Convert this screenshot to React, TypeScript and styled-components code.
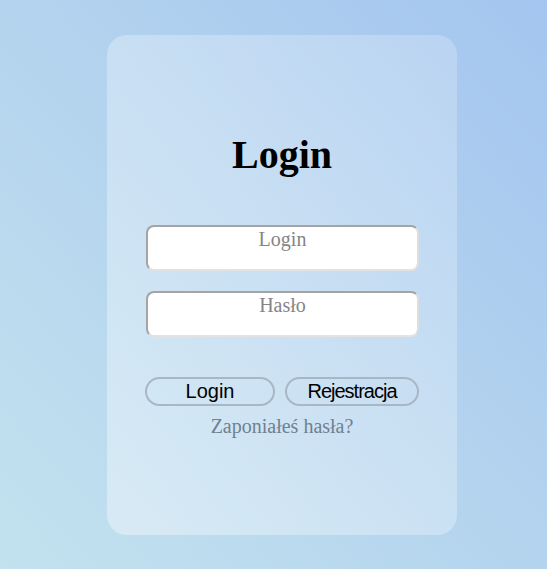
import React from "react";
import styled, { createGlobalStyle } from "styled-components";

const Global = createGlobalStyle`
  html, body { margin: 0; padding: 0; }
  body {
    font-family: "Liberation Serif", "Times New Roman", serif;
    background: linear-gradient(to top right, #c3e2ee, #a4c5ef);
    min-height: 100vh;
  }
`;

const Page = styled.main`
  min-height: 100vh;
  display: flex;
  align-items: center;
  padding-left: 107px;
  box-sizing: border-box;
`;

const Card = styled.section`
  width: 350px;
  height: 500px;
  border-radius: 20px;
  background: linear-gradient(to top right, rgba(255, 255, 255, 0.38), rgba(255, 255, 255, 0.2));
  display: flex;
  flex-direction: column;
  align-items: center;
  justify-content: center;
  box-sizing: border-box;
`;

const Title = styled.h1`
  margin: 0 0 47px;
  font-family: "Liberation Serif", serif;
  font-size: 40px;
  font-weight: bold;
  color: #000;
  line-height: normal;
`;

const Form = styled.form`
  width: 274px;
  display: flex;
  flex-direction: column;
  align-items: center;
`;

const Field = styled.input`
  width: 273px;
  height: 46px;
  box-sizing: border-box;
  margin: 0 0 20px 1px;
  padding: 1px 2px 18px;
  border-width: 2px;
  border-style: solid;
  border-color: #a4a4a4 #dedede #e2e2e2 #a4a4a4;
  border-radius: 8px;
  background: #fff;
  font-family: "Liberation Serif", serif;
  font-size: 20px;
  text-align: center;
  outline: none;
  &::placeholder { color: #858585; }
`;

const Buttons = styled.div`
  display: flex;
  gap: 10px;
  width: 274px;
  margin-top: 20px;
`;

const Btn = styled.button<{ $w: number; $tight?: boolean }>`
  width: ${(p) => p.$w}px;
  height: 29px;
  box-sizing: border-box;
  padding: 1px 6px;
  border: 2px solid #a7b7c6;
  border-radius: 15px;
  background: transparent;
  font-family: "Liberation Sans", Arial, sans-serif;
  font-size: 20px;
  letter-spacing: ${(p) => (p.$tight ? "-1px" : "normal")};
  color: #000;
  line-height: 23px;
  cursor: pointer;
`;

const Forgot = styled.a`
  margin-top: 9px;
  font-family: "Liberation Serif", serif;
  font-size: 20px;
  color: #708090;
  text-decoration: none;
  line-height: normal;
`;

export default function App() {
  return (
    <>
      <Global />
      <Page>
        <Card>
          <Title>Login</Title>
          <Form onSubmit={(e) => e.preventDefault()}>
            <Field type="text" placeholder="Login" />
            <Field type="password" placeholder="Hasło" />
            <Buttons>
              <Btn $w={130} type="submit">Login</Btn>
              <Btn $w={134} $tight type="button">Rejestracja</Btn>
            </Buttons>
            <Forgot href="#">Zaponiałeś hasła?</Forgot>
          </Form>
        </Card>
      </Page>
    </>
  );
}
